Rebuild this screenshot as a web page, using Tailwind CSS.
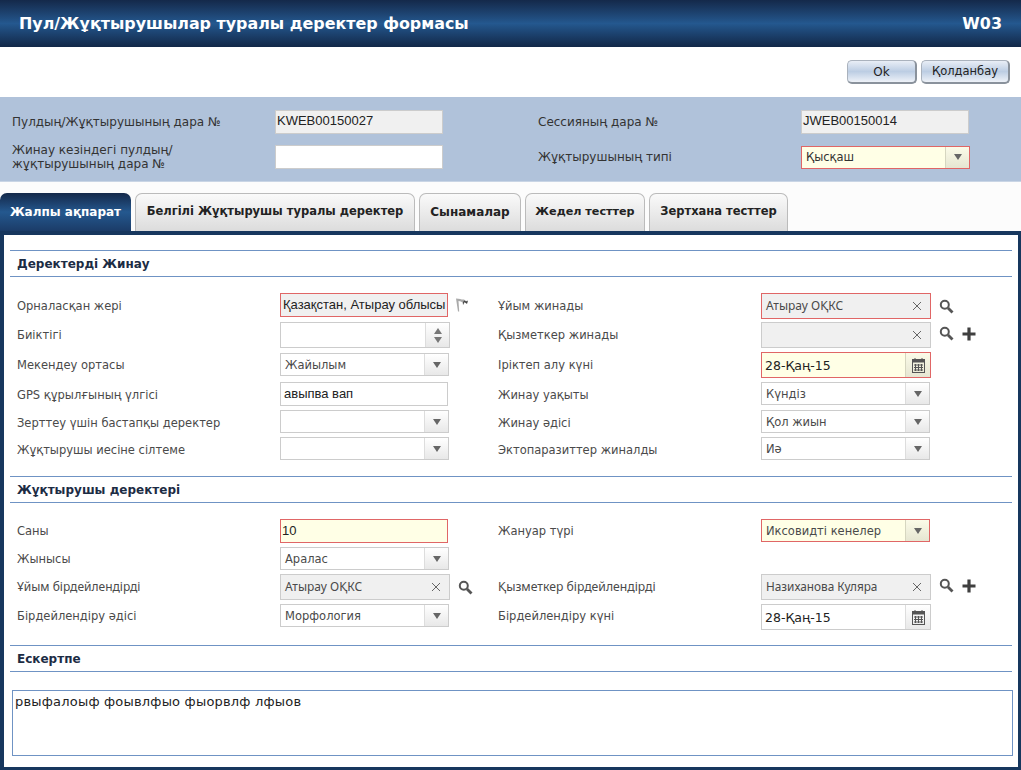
<!DOCTYPE html>
<html lang="kk">
<head>
<meta charset="UTF-8" />
<title>Пул/Жұқтырушылар туралы деректер формасы</title>
<script src="https://cdn.jsdelivr.net/npm/@tailwindcss/browser@4"></script>
</head>
<body class="bg-white font-['DejaVu_Sans',sans-serif] text-[11.5px] text-[#4a4a4a] overflow-hidden">
<div class="w-[1021px] h-[770px] flex flex-col overflow-hidden">

  <!-- title bar -->
  <header class="h-[47px] shrink-0 flex items-center justify-between pl-[19px] pr-[19px] pt-[1px] bg-gradient-to-b from-[#14294a] via-[#24588f] to-[#122848] text-white font-bold text-[15.9px]">
    <h1>Пул/Жұқтырушылар туралы деректер формасы</h1>
    <span>W03</span>
  </header>

  <!-- buttons -->
  <div class="h-[50px] shrink-0 flex items-start justify-end gap-[4px] pt-[13px] pr-[11px]">
    <button class="w-[70px] h-[24px] rounded-[5px] border border-[#aab2bd] border-r-2 border-b-2 border-r-[#8a929c] border-b-[#8a929c] bg-gradient-to-b from-[#e9eef6] via-[#bccde3] to-[#eef2f8] text-[#222] text-[12px]">Ok</button>
    <button class="w-[89px] h-[24px] rounded-[5px] border border-[#aab2bd] border-r-2 border-b-2 border-r-[#8a929c] border-b-[#8a929c] bg-gradient-to-b from-[#e9eef6] via-[#bccde3] to-[#eef2f8] text-[#222] text-[11.5px]">Қолданбау</button>
  </div>

  <!-- id panel -->
  <section class="h-[85px] shrink-0 bg-[#b0c2da] border-b border-[#c9d5e5] pt-[13px] text-[#333] text-[12px] flex flex-col gap-[11px]">
    <div class="flex h-[24px] items-center">
      <span class="w-[275px] pl-[12px]">Пулдың/Жұқтырушының дара №</span>
      <div class="w-[168px] h-[24px] border border-[#ccc] bg-[#f0f0f0] font-['Liberation_Sans',sans-serif] text-[13px] leading-[20px] text-[#222] pl-[1px]">KWEB00150027</div>
      <span class="w-[358px] pl-[95px]">Сессияның дара №</span>
      <div class="w-[168px] h-[24px] border border-[#ccc] bg-[#f0f0f0] font-['Liberation_Sans',sans-serif] text-[13px] leading-[20px] text-[#222] pl-[1px]">JWEB00150014</div>
    </div>
    <div class="flex h-[24px] items-center">
      <span class="w-[275px] pl-[12px] leading-[14px]">Жинау кезіндегі пулдың/<br />жұқтырушының дара №</span>
      <div class="w-[168px] h-[24px] border border-[#ccc] bg-white"></div>
      <span class="w-[358px] pl-[95px]">Жұқтырушының типі</span>
      <div class="w-[169px] h-[23px] border border-[#e06666] bg-[#ffffe6] flex text-[#333] text-[11.5px]">
        <span class="flex-1 pl-[4px] leading-[21px]">Қысқаш</span>
        <span class="w-[24px] border-l border-[#d6d6c0] bg-gradient-to-b from-[#fbfbe8] to-[#e6e6d2] flex items-center justify-center"><svg width="8" height="6" viewBox="0 0 8 6"><path d="M0 0h8L4 6z" fill="#666" /></svg></span>
      </div>
    </div>
  </section>

  <!-- tabs -->
  <nav class="h-[49px] shrink-0 flex items-end gap-[4px] bg-[#fcfcfc] font-bold text-[12px] text-[#222]">
    <div class="w-[131px] h-[38px] rounded-t-[7px] bg-gradient-to-b from-[#14294a] via-[#24588f] to-[#1b3c68] text-white flex items-center justify-center pb-[1px]">Жалпы ақпарат</div>
    <div class="w-[280px] h-[38px] rounded-t-[7px] border border-b-0 border-[#bbb] bg-gradient-to-b from-[#fafafa] to-[#dcdcdc] flex items-center justify-center pb-[1px] text-[11.5px]">Белгілі Жұқтырушы туралы деректер</div>
    <div class="w-[102px] h-[38px] rounded-t-[7px] border border-b-0 border-[#bbb] bg-gradient-to-b from-[#fafafa] to-[#dcdcdc] flex items-center justify-center pb-[1px]">Сынамалар</div>
    <div class="w-[120px] h-[38px] rounded-t-[7px] border border-b-0 border-[#bbb] bg-gradient-to-b from-[#fafafa] to-[#dcdcdc] flex items-center justify-center pb-[1px] text-[11.2px]">Жедел тесттер</div>
    <div class="w-[139px] h-[38px] rounded-t-[7px] border border-b-0 border-[#bbb] bg-gradient-to-b from-[#fafafa] to-[#dcdcdc] flex items-center justify-center pb-[1px] text-[11.5px]">Зертхана тесттер</div>
  </nav>

  <!-- form body -->
  <main class="flex-1 border-l-4 border-r-[3px] border-t-4 border-b-[3px] border-[#17375e] bg-white pt-[15px] px-[6px]">

    <h2 class="h-[27px] border-y border-[#6f93c4] pl-[7px] font-bold text-[12px] text-[#1c2c44] leading-[27px]">Деректерді Жинау</h2>
    <div class="pl-[7px] pt-[16px] flex flex-col h-[199px]">
      <div class="flex h-[29px]">
        <span class="w-[263px] pt-[5px]">Орналасқан жері</span>
        <div class="w-[168px] h-[24px] border border-[#e06666] bg-[#f0f0f0] font-['Liberation_Sans',sans-serif] text-[13px] leading-[21px] text-[#222] pl-[2px] whitespace-nowrap">Қазақстан, Атырау облысы</div>
        <span class="w-[50px] pl-[7px] pt-[5px]"><svg width="14" height="14" viewBox="0 0 14 14"><path d="M1 0.500l2 13h1.200L3.500 3c2 0 3 1 4 1.500L8 7l1-3 3 2 1-3.500-2 .5L9 1.500C7 2 5 .5 1 .5z" fill="#aaa" /><path d="M8 4l.5 3 1-3 2.500 1.800.8-3L11 3.500 9.500 2.500z" fill="#444" /></svg></span>
        <span class="w-[263px] pt-[5px]">Ұйым жинады</span>
        <div class="w-[170px] h-[26px] border border-[#e06666] bg-[#f0f0f0] flex items-center pl-[4px] pr-[8px]"><span class="flex-1 font-['Noto_Sans',sans-serif] text-[12px]">Атырау ОҚКС</span><svg width="10" height="10" viewBox="0 0 10 10"><path d="M1 1l8 8M9 1l-8 8" stroke="#666" stroke-width="1" /></svg></div>
        <span class="pl-[8px] pt-[6px]"><svg width="15" height="15" viewBox="0 0 15 15"><circle cx="5.800" cy="5.800" r="4" fill="none" stroke="#555" stroke-width="2" /><path d="M9 9l4.500 4.500" stroke="#555" stroke-width="2.800" /></svg></span>
      </div>
      <div class="flex h-[30px]">
        <span class="w-[263px] pt-[5px]">Биіктігі</span>
        <div class="w-[170px] h-[26px] border border-[#ccc] bg-white flex justify-end">
          <span class="w-[24px] border-l border-[#ddd] bg-gradient-to-b from-white to-[#e8e8e8] flex flex-col items-center justify-center gap-[3px]"><svg width="8" height="6" viewBox="0 0 8 6"><path d="M0 6h8L4 0z" fill="#777" /></svg><svg width="8" height="6" viewBox="0 0 8 6"><path d="M0 0h8L4 6z" fill="#777" /></svg></span>
        </div>
        <span class="w-[48px]"></span>
        <span class="w-[263px] pt-[5px]">Қызметкер жинады</span>
        <div class="w-[170px] h-[26px] border border-[#ccc] bg-[#f0f0f0] flex items-center justify-end pr-[8px]"><svg width="10" height="10" viewBox="0 0 10 10"><path d="M1 1l8 8M9 1l-8 8" stroke="#666" stroke-width="1" /></svg></div>
        <span class="pl-[8px] pt-[4px]"><svg width="15" height="15" viewBox="0 0 15 15"><circle cx="5.800" cy="5.800" r="4" fill="none" stroke="#555" stroke-width="2" /><path d="M9 9l4.500 4.500" stroke="#555" stroke-width="2.800" /></svg></span>
        <span class="pl-[8px] pt-[5px]"><svg width="14" height="14" viewBox="0 0 14 14"><path d="M7 0.500v13M0.500 7h13" stroke="#3f3f3f" stroke-width="3.200" /></svg></span>
      </div>
      <div class="flex h-[30px]">
        <span class="w-[263px] pt-[5px]">Мекендеу ортасы</span>
        <div class="w-[169px] h-[23px] mt-[1px] border border-[#ccc] bg-white flex"><span class="flex-1 pl-[4px] leading-[22px]">Жайылым</span><span class="w-[24px] border-l border-[#ddd] bg-gradient-to-b from-white to-[#e8e8e8] flex items-center justify-center"><svg width="8" height="6" viewBox="0 0 8 6"><path d="M0 0h8L4 6z" fill="#666" /></svg></span></div>
        <span class="w-[49px]"></span>
        <span class="w-[263px] pt-[5px]">Іріктеп алу күні</span>
        <div class="w-[170px] h-[26px] border border-[#e06666] bg-[#ffffe6] flex text-[#222]"><span class="flex-1 pl-[3px] text-[12.5px] leading-[26px]">28-Қаң-15</span><span class="w-[25px] border-l border-[#d6d6c0] bg-gradient-to-b from-[#fbfbe8] to-[#e6e6d2] flex items-center justify-center"><svg width="13" height="15" viewBox="0 0 13 15"><rect x="0.500" y="1.500" width="12" height="13" fill="none" stroke="#555" /><rect x="0.500" y="1.500" width="12" height="3" fill="#555" /><path d="M3 0v3M10 0v3M2 7h9M2 9.500h9M2 12h9M3.500 6v7M6.500 6v7M9.500 6v7" stroke="#555" /></svg></span></div>
      </div>
      <div class="flex h-[28px]">
        <span class="w-[263px] pt-[5px]">GPS құрылғының үлгісі</span>
        <div class="w-[168px] h-[24px] border border-[#ccc] bg-white font-['Liberation_Sans',sans-serif] text-[13px] leading-[21px] text-[#222] pl-[3px]">авыпва вап</div>
        <span class="w-[50px]"></span>
        <span class="w-[263px] pt-[5px]">Жинау уақыты</span>
        <div class="w-[169px] h-[23px] border border-[#ccc] bg-white flex"><span class="flex-1 pl-[4px] leading-[22px]">Күндіз</span><span class="w-[24px] border-l border-[#ddd] bg-gradient-to-b from-white to-[#e8e8e8] flex items-center justify-center"><svg width="8" height="6" viewBox="0 0 8 6"><path d="M0 0h8L4 6z" fill="#666" /></svg></span></div>
      </div>
      <div class="flex h-[27px]">
        <span class="w-[263px] pt-[5px]">Зерттеу үшін бастапқы деректер</span>
        <div class="w-[169px] h-[23px] border border-[#ccc] bg-white flex"><span class="flex-1"></span><span class="w-[24px] border-l border-[#ddd] bg-gradient-to-b from-white to-[#e8e8e8] flex items-center justify-center"><svg width="8" height="6" viewBox="0 0 8 6"><path d="M0 0h8L4 6z" fill="#666" /></svg></span></div>
        <span class="w-[49px]"></span>
        <span class="w-[263px] pt-[5px]">Жинау әдісі</span>
        <div class="w-[169px] h-[23px] border border-[#ccc] bg-white flex"><span class="flex-1 pl-[4px] leading-[22px]">Қол жиын</span><span class="w-[24px] border-l border-[#ddd] bg-gradient-to-b from-white to-[#e8e8e8] flex items-center justify-center"><svg width="8" height="6" viewBox="0 0 8 6"><path d="M0 0h8L4 6z" fill="#666" /></svg></span></div>
      </div>
      <div class="flex h-[27px]">
        <span class="w-[263px] pt-[5px]">Жұқтырушы иесіне сілтеме</span>
        <div class="w-[169px] h-[23px] border border-[#ccc] bg-white flex"><span class="flex-1"></span><span class="w-[24px] border-l border-[#ddd] bg-gradient-to-b from-white to-[#e8e8e8] flex items-center justify-center"><svg width="8" height="6" viewBox="0 0 8 6"><path d="M0 0h8L4 6z" fill="#666" /></svg></span></div>
        <span class="w-[49px]"></span>
        <span class="w-[263px] pt-[5px]">Эктопаразиттер жиналды</span>
        <div class="w-[169px] h-[23px] border border-[#ccc] bg-white flex"><span class="flex-1 pl-[4px] leading-[22px]">Иә</span><span class="w-[24px] border-l border-[#ddd] bg-gradient-to-b from-white to-[#e8e8e8] flex items-center justify-center"><svg width="8" height="6" viewBox="0 0 8 6"><path d="M0 0h8L4 6z" fill="#666" /></svg></span></div>
      </div>
    </div>

    <h2 class="h-[27px] border-y border-[#6f93c4] pl-[7px] font-bold text-[12px] text-[#1c2c44] leading-[27px]">Жұқтырушы деректері</h2>
    <div class="pl-[7px] pt-[16px] flex flex-col h-[142px]">
      <div class="flex h-[28px]">
        <span class="w-[263px] pt-[4px]">Саны</span>
        <div class="w-[168px] h-[24px] border border-[#e06666] bg-[#ffffe6] font-['Liberation_Sans',sans-serif] text-[13px] leading-[21px] text-[#222] pl-[1px]">10</div>
        <span class="w-[50px]"></span>
        <span class="w-[263px] pt-[4px]">Жануар түрі</span>
        <div class="w-[169px] h-[23px] border border-[#e06666] bg-[#ffffe6] flex"><span class="flex-1 pl-[4px] leading-[22px]">Иксовидті кенелер</span><span class="w-[24px] border-l border-[#d6d6c0] bg-gradient-to-b from-[#fbfbe8] to-[#e6e6d2] flex items-center justify-center"><svg width="8" height="6" viewBox="0 0 8 6"><path d="M0 0h8L4 6z" fill="#666" /></svg></span></div>
      </div>
      <div class="flex h-[27px]">
        <span class="w-[263px] pt-[4px]">Жынысы</span>
        <div class="w-[169px] h-[23px] border border-[#ccc] bg-white flex"><span class="flex-1 pl-[4px] leading-[22px]">Аралас</span><span class="w-[24px] border-l border-[#ddd] bg-gradient-to-b from-white to-[#e8e8e8] flex items-center justify-center"><svg width="8" height="6" viewBox="0 0 8 6"><path d="M0 0h8L4 6z" fill="#666" /></svg></span></div>
      </div>
      <div class="flex h-[30px]">
        <span class="w-[263px] pt-[4px] font-['Noto_Sans',sans-serif] text-[12px]">Ұйым бірдейлендірді</span>
        <div class="w-[170px] h-[26px] border border-[#ccc] bg-[#f0f0f0] flex items-center pl-[4px] pr-[8px]"><span class="flex-1 font-['Noto_Sans',sans-serif] text-[12px]">Атырау ОҚКС</span><svg width="10" height="10" viewBox="0 0 10 10"><path d="M1 1l8 8M9 1l-8 8" stroke="#666" stroke-width="1" /></svg></div>
        <span class="w-[48px] pl-[8px] pt-[6px]"><svg width="15" height="15" viewBox="0 0 15 15"><circle cx="5.800" cy="5.800" r="4" fill="none" stroke="#555" stroke-width="2" /><path d="M9 9l4.500 4.500" stroke="#555" stroke-width="2.800" /></svg></span>
        <span class="w-[263px] pt-[4px] font-['Noto_Sans',sans-serif] text-[12.2px]">Қызметкер бірдейлендірді</span>
        <div class="w-[170px] h-[26px] border border-[#ccc] bg-[#f0f0f0] flex items-center pl-[4px] pr-[8px]"><span class="flex-1 font-['Noto_Sans',sans-serif] text-[11.8px]">Назиханова Куляра</span><svg width="10" height="10" viewBox="0 0 10 10"><path d="M1 1l8 8M9 1l-8 8" stroke="#666" stroke-width="1" /></svg></div>
        <span class="pl-[8px] pt-[4px]"><svg width="15" height="15" viewBox="0 0 15 15"><circle cx="5.800" cy="5.800" r="4" fill="none" stroke="#555" stroke-width="2" /><path d="M9 9l4.500 4.500" stroke="#555" stroke-width="2.800" /></svg></span>
        <span class="pl-[8px] pt-[5px]"><svg width="14" height="14" viewBox="0 0 14 14"><path d="M7 0.500v13M0.500 7h13" stroke="#3f3f3f" stroke-width="3.200" /></svg></span>
      </div>
      <div class="flex h-[27px]">
        <span class="w-[263px] pt-[4px]">Бірдейлендіру әдісі</span>
        <div class="w-[169px] h-[23px] border border-[#ccc] bg-white flex"><span class="flex-1 pl-[4px] leading-[22px]">Морфология</span><span class="w-[24px] border-l border-[#ddd] bg-gradient-to-b from-white to-[#e8e8e8] flex items-center justify-center"><svg width="8" height="6" viewBox="0 0 8 6"><path d="M0 0h8L4 6z" fill="#666" /></svg></span></div>
        <span class="w-[49px]"></span>
        <span class="w-[263px] pt-[4px]">Бірдейлендіру күні</span>
        <div class="w-[170px] h-[26px] border border-[#ccc] bg-white flex text-[#222]"><span class="flex-1 pl-[3px] text-[12.5px] leading-[26px]">28-Қаң-15</span><span class="w-[25px] border-l border-[#ddd] bg-gradient-to-b from-white to-[#e8e8e8] flex items-center justify-center"><svg width="13" height="15" viewBox="0 0 13 15"><rect x="0.500" y="1.500" width="12" height="13" fill="none" stroke="#555" /><rect x="0.500" y="1.500" width="12" height="3" fill="#555" /><path d="M3 0v3M10 0v3M2 7h9M2 9.500h9M2 12h9M3.500 6v7M6.500 6v7M9.500 6v7" stroke="#555" /></svg></span></div>
      </div>
    </div>

    <h2 class="h-[27px] border-y border-[#6f93c4] pl-[7px] font-bold text-[12px] text-[#1c2c44] leading-[27px]">Ескертпе</h2>
    <div class="mt-[18px] ml-[2px] mr-[-1px] h-[66px] border border-[#6f93c4] text-[#222] text-[13px] tracking-[0.2px] pl-[2px] pt-[1px]">рвыфалоыф фоывлфыо фыорвлф лфыов</div>
  </main>
</div>
</body>
</html>
